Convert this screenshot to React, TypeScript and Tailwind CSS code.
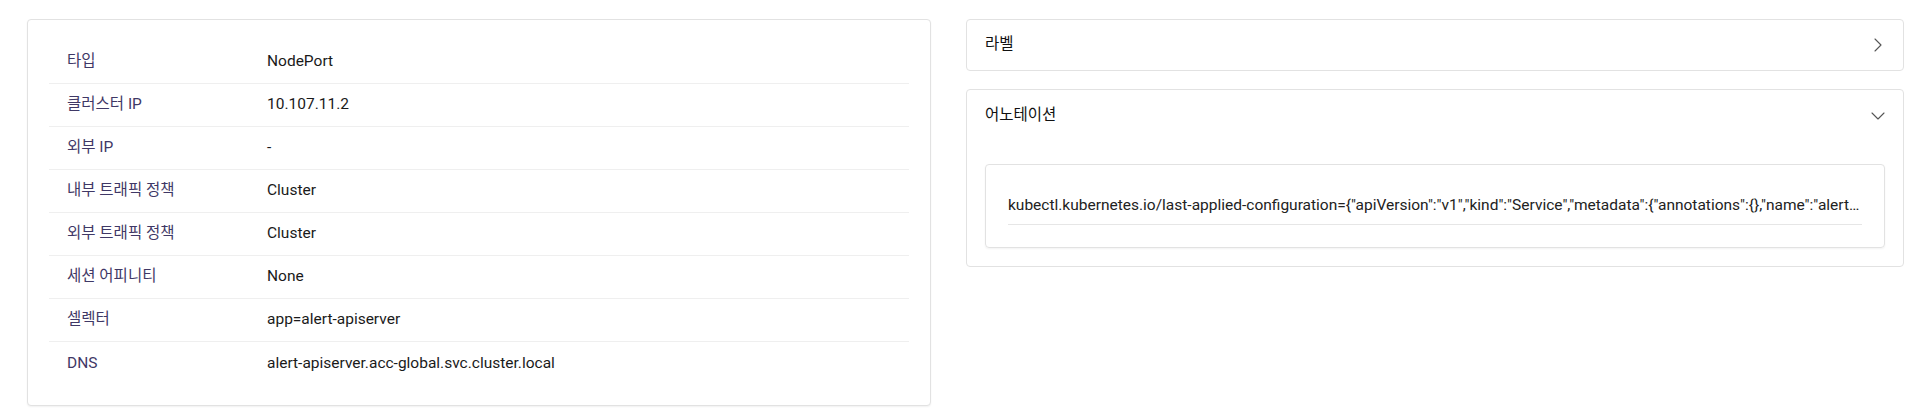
import { ChevronRight, ChevronDown } from "lucide-react";

const rows: [string, string][] = [
  ["타입", "NodePort"],
  ["클러스터 IP", "10.107.11.2"],
  ["외부 IP", "-"],
  ["내부 트래픽 정책", "Cluster"],
  ["외부 트래픽 정책", "Cluster"],
  ["세션 어피니티", "None"],
  ["셀렉터", "app=alert-apiserver"],
  ["DNS", "alert-apiserver.acc-global.svc.cluster.local"],
];

const annotation =
  'kubectl.kubernetes.io/last-applied-configuration={"apiVersion":"v1","kind":"Service","metadata":{"annotations":{},"name":"alert-apiserver","namespace":"acc-global"},"spec":{"ports":[{"port":8080}]}}';

export default function App() {
  return (
    <div
      className="flex h-[413px] w-[1931px] items-start gap-[35px] bg-white pl-[27px] pr-[27px] pt-[19px] text-[15.5px]"
      style={{ fontFamily: 'Roboto, "Noto Sans CJK KR", sans-serif' }}
    >
      {/* 상세 정보 */}
      <div className="w-[904px] shrink-0 rounded border border-[#e2e2e2] bg-white px-[21px] pb-[20px] pt-[21px] shadow-[0_1px_2px_rgba(0,0,0,0.06)]">
        {rows.map(([label, value], i) => (
          <div
            key={label}
            className={`flex h-[43px] items-center px-[18px] ${
              i < rows.length - 1 ? "border-b border-[#efefef]" : ""
            }`}
          >
            <span className="w-[200px] shrink-0 text-[#3f3866]">{label}</span>
            <span className="whitespace-nowrap text-[#1a1a1a]">{value}</span>
          </div>
        ))}
      </div>

      <div className="flex min-w-0 flex-1 flex-col gap-[18px]">
        {/* 라벨 */}
        <div className="flex h-[52px] items-center justify-between rounded border border-[#e2e2e2] bg-white pl-[18px] pr-[13px]">
          <span className="text-[#111]">라벨</span>
          <ChevronRight className="h-6 w-6 text-[#555]" strokeWidth={1.1} />
        </div>

        {/* 어노테이션 */}
        <div className="rounded border border-[#e2e2e2] bg-white">
          <div className="flex h-[52px] items-center justify-between pl-[18px] pr-[13px]">
            <span className="text-[#111]">어노테이션</span>
            <ChevronDown className="h-6 w-6 text-[#555]" strokeWidth={1.1} />
          </div>
          <div className="px-[18px] pb-[18px] pt-[22px]">
            <div className="rounded border border-[#e2e2e2] px-[22px] py-[22px] shadow-[0_1px_2px_rgba(0,0,0,0.05)]">
              <div className="flex h-[38px] min-w-0 items-center border-b border-[#e6e6e6]">
                <span className="min-w-0 truncate text-[#222]">{annotation}</span>
              </div>
            </div>
          </div>
        </div>
      </div>
    </div>
  );
}
